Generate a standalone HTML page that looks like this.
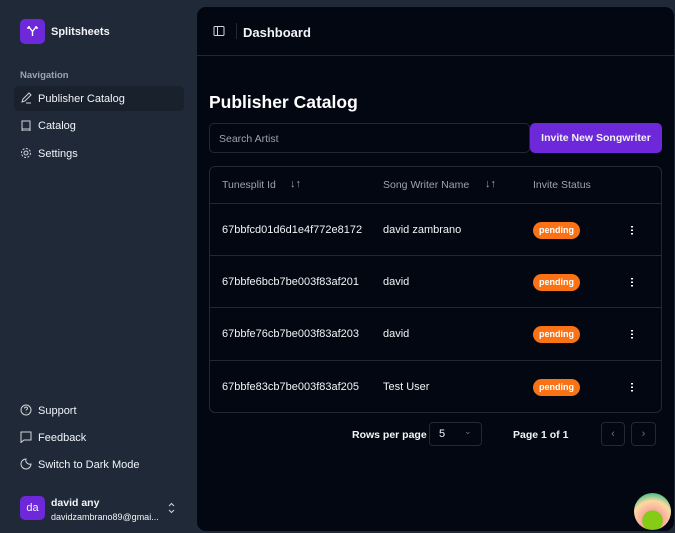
<!DOCTYPE html><html><head><style>
*{box-sizing:border-box;margin:0;padding:0}
body{width:675px;height:533px;background:#1f2937;font-family:"Liberation Sans",sans-serif;color:#f3f4f6;position:relative;overflow:hidden;font-size:11px}
.abs{position:absolute}
.logo{left:20px;top:19px;width:25px;height:25px;background:#6d28d9;border-radius:5px}
.nav{left:20px;font-size:11px;color:#f1f5f9}
.ic{position:absolute;left:20px;width:12px;height:12px}
.main{left:197px;top:7px;width:477px;height:524px;background:#030712;border-radius:9px}
.tbl{left:209px;top:166px;width:453px;height:247px;border:1px solid #1f2937;border-radius:6px}
.row{position:absolute;left:0;width:451px;border-top:1px solid #1f2937}
.pill{position:absolute;left:323px;background:#f97316;color:#fff;font-weight:bold;font-size:9px;border-radius:9px;padding:3px 6px 4px}
.dots{position:absolute;left:421px;width:2px;height:10px;background:radial-gradient(circle,#fff 0.9px,transparent 1px) 0 0/2px 3.5px}
</style></head><body>
<div class="abs logo"><svg width="25" height="25" viewBox="0 0 25 25" fill="none" stroke="#fff" stroke-width="1.4"><path d="M9 8l3.5 4.5L16 8M12.5 12.5V17M8 8h2M8 8v2M17 8h-2M17 8v2"/></svg></div>
<div class="abs" style="left:51px;top:26px;font-weight:bold;font-size:11px">Splitsheets</div>
<div class="abs" style="left:20px;top:70px;font-size:9.5px;color:#9ca3af;font-weight:bold">Navigation</div>
<div class="abs" style="left:14px;top:86px;width:170px;height:25px;background:#19212d;border-radius:5px"></div>
<svg class="ic" style="top:92px" viewBox="0 0 12 12" fill="none" stroke="#d1d5db" stroke-width="1"><path d="M2 10l1-3 6-6 2 2-6 6zM6 11h5"/></svg>
<div class="abs nav" style="left:38px;top:93px">Publisher Catalog</div>
<svg class="ic" style="top:119px" viewBox="0 0 12 12" fill="none" stroke="#d1d5db" stroke-width="1"><path d="M2 10V2h8v10H3a1 1 0 010-2h7"/></svg>
<div class="abs nav" style="left:38px;top:120px">Catalog</div>
<svg class="ic" style="top:147px" viewBox="0 0 12 12" fill="none" stroke="#d1d5db" stroke-width="1"><circle cx="6" cy="6" r="2"/><circle cx="6" cy="6" r="4.5" stroke-dasharray="2 1.5"/></svg>
<div class="abs nav" style="left:38px;top:148px">Settings</div>
<svg class="ic" style="top:404px" viewBox="0 0 12 12" fill="none" stroke="#d1d5db" stroke-width="1"><circle cx="6" cy="6" r="5"/><path d="M4.5 4.5a1.5 1.5 0 113 0c0 1-1.5 1-1.5 2M6 8.5v.5"/></svg>
<div class="abs nav" style="left:38px;top:405px">Support</div>
<svg class="ic" style="top:431px" viewBox="0 0 12 12" fill="none" stroke="#d1d5db" stroke-width="1"><path d="M1 1h10v8H4l-3 2.5z"/></svg>
<div class="abs nav" style="left:38px;top:432px">Feedback</div>
<svg class="ic" style="top:458px" viewBox="0 0 12 12" fill="none" stroke="#d1d5db" stroke-width="1"><path d="M6 1a5 5 0 105 5A4 4 0 016 1z"/></svg>
<div class="abs nav" style="left:38px;top:459px">Switch to Dark Mode</div>
<div class="abs" style="left:20px;top:496px;width:25px;height:24px;background:#6d28d9;border-radius:5px;text-align:center;line-height:24px;font-size:11px">da</div>
<div class="abs" style="left:51px;top:497px;font-weight:bold;font-size:10.5px">david any</div>
<div class="abs" style="left:51px;top:512px;font-size:9px">davidzambrano89@gmai...</div>
<svg class="abs" style="left:167px;top:502px" width="9" height="12" viewBox="0 0 9 12" fill="none" stroke="#d1d5db" stroke-width="1"><path d="M2 4l2.5-2.5L7 4M2 8l2.5 2.5L7 8"/></svg>
<div class="abs main">
<svg class="abs" style="left:16px;top:18px" width="12" height="12" viewBox="0 0 12 12" fill="none" stroke="#d1d5db" stroke-width="1"><rect x="1" y="1.5" width="10" height="9" rx="1"/><path d="M4.5 1.5v9"/></svg>
<div class="abs" style="left:39px;top:16px;width:1px;height:16px;background:#1f2937"></div>
<div class="abs" style="left:46px;top:18px;font-weight:bold;font-size:13px">Dashboard</div>
<div class="abs" style="left:0;top:48px;width:477px;height:1px;background:#1f2937"></div>
<div class="abs" style="left:12px;top:85px;font-weight:bold;font-size:17.5px;color:#fff">Publisher Catalog</div>
<div class="abs" style="left:12px;top:116px;width:321px;height:30px;border:1px solid #1f2937;border-radius:5px;color:#9ca3af;padding:9px 9px;font-size:10.5px">Search Artist</div>
<div class="abs" style="left:333px;top:116px;width:132px;height:30px;background:#6d28d9;border-radius:5px;text-align:center;line-height:30px;font-weight:bold;font-size:10.5px">Invite New Songwriter</div>
</div>
<div class="abs tbl">
<div class="abs" style="left:12px;top:12px;color:#9ca3af;font-size:10.5px">Tunesplit Id</div><div class="abs" style="left:80px;top:11px;color:#9ca3af;font-size:11px">↓↑</div>
<div class="abs" style="left:173px;top:12px;color:#9ca3af;font-size:10.5px">Song Writer Name</div><div class="abs" style="left:275px;top:11px;color:#9ca3af;font-size:11px">↓↑</div>
<div class="abs" style="left:323px;top:12px;color:#9ca3af;font-size:10.5px">Invite Status</div>
<div class="row" style="top:36px;height:52px"><div class="abs" style="left:12px;top:20px">67bbfcd01d6d1e4f772e8172</div><div class="abs" style="left:173px;top:20px">david zambrano</div><div class="pill" style="top:18px">pending</div><div class="dots" style="top:21px"></div></div>
<div class="row" style="top:88px;height:52px"><div class="abs" style="left:12px;top:20px">67bbfe6bcb7be003f83af201</div><div class="abs" style="left:173px;top:20px">david</div><div class="pill" style="top:18px">pending</div><div class="dots" style="top:21px"></div></div>
<div class="row" style="top:140px;height:53px"><div class="abs" style="left:12px;top:20px">67bbfe76cb7be003f83af203</div><div class="abs" style="left:173px;top:20px">david</div><div class="pill" style="top:18px">pending</div><div class="dots" style="top:21px"></div></div>
<div class="row" style="top:193px;height:52px"><div class="abs" style="left:12px;top:20px">67bbfe83cb7be003f83af205</div><div class="abs" style="left:173px;top:20px">Test User</div><div class="pill" style="top:18px">pending</div><div class="dots" style="top:21px"></div></div>
</div>
<div class="abs" style="left:352px;top:429px;font-weight:bold;font-size:10.5px">Rows per page</div>
<div class="abs" style="left:429px;top:422px;width:53px;height:24px;border:1px solid #1f2937;border-radius:4px;padding:5px 9px;font-size:11px">5<span style="position:absolute;left:34px;top:3px;color:#6b7280;font-size:9px">⌄</span></div>
<div class="abs" style="left:513px;top:429px;font-weight:bold;font-size:10.5px">Page 1 of 1</div>
<div class="abs" style="left:601px;top:422px;width:24px;height:24px;border:1px solid #1f2937;border-radius:4px;color:#6b7280;text-align:center;line-height:22px">‹</div>
<div class="abs" style="left:631px;top:422px;width:25px;height:24px;border:1px solid #1f2937;border-radius:4px;color:#6b7280;text-align:center;line-height:22px">›</div>
<div class="abs" style="left:634px;top:493px;width:37px;height:37px;border-radius:50%;background:radial-gradient(circle at 50% 75%,#84cc16 30%,#f9a8a0 32%,#fcd9a0 60%,#10b981 90%)"></div>
</body></html>
